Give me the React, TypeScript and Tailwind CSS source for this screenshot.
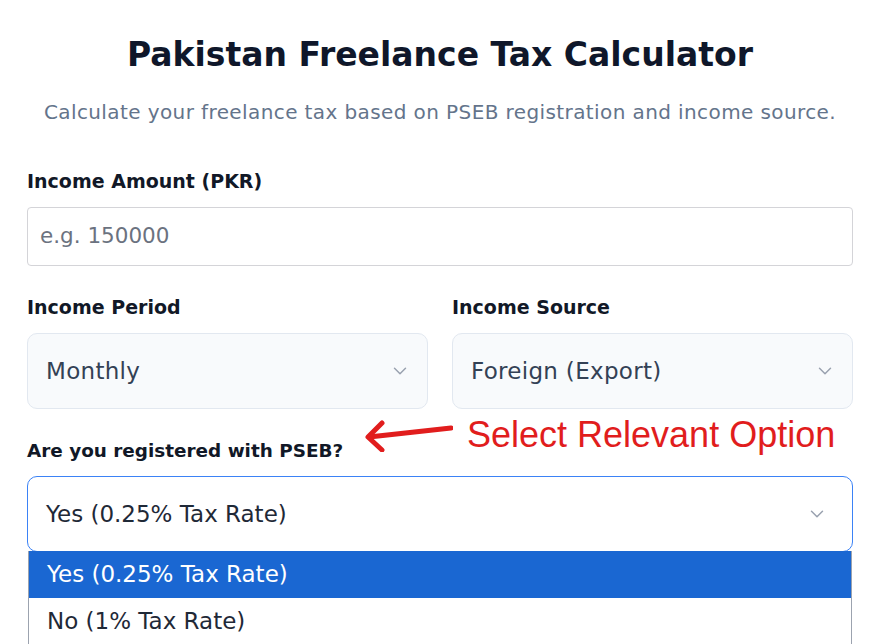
import { ChevronDown } from 'lucide-react';

const font = { fontFamily: '"DejaVu Sans", Inter, sans-serif' };

function Chevron() {
  return <ChevronDown className="w-[22px] h-[22px] text-gray-400" strokeWidth={1.6} />;
}

export default function App() {
  return (
    <div className="w-[887px] h-[644px] overflow-hidden bg-white" style={font}>
      <div className="pl-[27px] pr-[34px]">
        {/* Header */}
        <h1 className="pt-[34px] text-center text-[33px] leading-[42px] font-bold text-[#0f172a]">
          Pakistan Freelance Tax Calculator
        </h1>
        <p className="mt-[22px] text-center text-[20px] leading-[28px] tracking-[0.4px] text-[#64748b]">
          Calculate your freelance tax based on PSEB registration and income source.
        </p>

        {/* Income amount */}
        <label className="block mt-[43px] text-[19px] leading-[24px] font-bold text-[#111827]">
          Income Amount (PKR)
        </label>
        <div className="mt-[14px] h-[59px] rounded-[4px] border border-[#d4d4d8] flex items-center px-[12px]">
          <span className="text-[21.5px] text-[#6b7280]">e.g. 150000</span>
        </div>

        {/* Period & source */}
        <div className="mt-[29px] grid grid-cols-2 gap-[24px]">
          <div>
            <label className="block text-[19px] leading-[24px] font-bold text-[#111827]">Income Period</label>
            <div className="mt-[14px] h-[76px] rounded-[10px] border border-[#e2e8f0] bg-[#f8fafc] flex items-center justify-between pl-[18px] pr-[16px]">
              <span className="text-[23px] tracking-[0.3px] text-[#334155]">Monthly</span>
              <Chevron />
            </div>
          </div>
          <div>
            <label className="block text-[19px] leading-[24px] font-bold text-[#111827]">Income Source</label>
            <div className="mt-[14px] h-[76px] rounded-[10px] border border-[#e2e8f0] bg-[#f8fafc] flex items-center justify-between pl-[18px] pr-[16px]">
              <span className="text-[23px] tracking-[0.3px] text-[#334155]">Foreign (Export)</span>
              <Chevron />
            </div>
          </div>
        </div>

        {/* PSEB */}
        <div className="relative mt-[30px]">
          <label className="block text-[18.4px] leading-[24px] font-bold text-[#111827]">
            Are you registered with PSEB?
          </label>
          {/* annotation */}
          <div className="absolute left-[336px] top-[-25px] flex items-center gap-[14px]">
            <svg width="90" height="34" viewBox="0 0 90 34" fill="none">
              <path d="M88 10 L6 19" stroke="#e11d1d" strokeWidth="5" strokeLinecap="round" />
              <path d="M19 5 L5 19 L19 32" stroke="#e11d1d" strokeWidth="5" strokeLinecap="round" strokeLinejoin="round" />
            </svg>
            <span
              className="text-[36px] leading-[42px] text-[#e11d1d]"
              style={{ fontFamily: '"Liberation Sans", Arial, sans-serif' }}
            >
              Select Relevant Option
            </span>
          </div>

          <div className="relative mt-[13px]">
            <div className="h-[76px] rounded-[10px] border border-[#3b82f6] bg-white flex items-center justify-between pl-[18px] pr-[24px]">
              <span className="text-[23px] text-[#1f2937]">Yes (0.25% Tax Rate)</span>
              <Chevron />
            </div>
            <div className="absolute left-[1px] right-[1px] top-[75px] border-x border-[#9ca3af] bg-white">
              <div className="h-[47px] bg-[#1a67d2] flex items-center pl-[18px]">
                <span className="text-[23px] text-white">Yes (0.25% Tax Rate)</span>
              </div>
              <div className="h-[47px] flex items-center pl-[18px]">
                <span className="text-[23px] text-[#1f2937]">No (1% Tax Rate)</span>
              </div>
            </div>
          </div>
        </div>
      </div>
    </div>
  );
}
